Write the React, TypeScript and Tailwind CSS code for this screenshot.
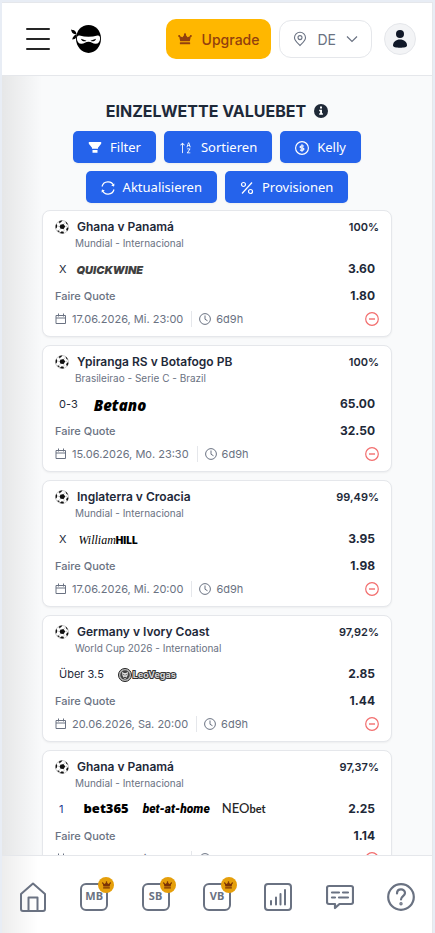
import { ReactNode } from "react";
import { BsSortAlphaUp } from "react-icons/bs";

interface Bet {
  id: number;
  match: string;
  league: string;
  percent: string;
  pick: string;
  isLink?: boolean;
  books: string[];
  odds: string;
  fairOdds: string;
  date: string;
}

const bets: Bet[] = [
  { id: 1, match: "Ghana v Panamá", league: "Mundial - Internacional", percent: "100%", pick: "X", books: ["quickwin"], odds: "3.60", fairOdds: "1.80", date: "17.06.2026, Mi. 23:00" },
  { id: 2, match: "Ypiranga RS v Botafogo PB", league: "Brasileirao - Serie C - Brazil", percent: "100%", pick: "0-3", books: ["betano"], odds: "65.00", fairOdds: "32.50", date: "15.06.2026, Mo. 23:30" },
  { id: 3, match: "Inglaterra v Croacia", league: "Mundial - Internacional", percent: "99,49%", pick: "X", books: ["williamhill"], odds: "3.95", fairOdds: "1.98", date: "17.06.2026, Mi. 20:00" },
  { id: 4, match: "Germany v Ivory Coast", league: "World Cup 2026 - International", percent: "97,92%", pick: "Über 3.5", books: ["leovegas"], odds: "2.85", fairOdds: "1.44", date: "20.06.2026, Sa. 20:00" },
  { id: 5, match: "Ghana v Panamá", league: "Mundial - Internacional", percent: "97,37%", pick: "1", isLink: true, books: ["bet365", "betathome", "neobet"], odds: "2.25", fairOdds: "1.14", date: "17.06.2026, Mi. 23:00" },
];

function CrownIcon({ className }: { className: string }) {
  return (
    <svg viewBox="0 0 16 14" fill="currentColor" className={className} aria-hidden="true">
      <path d="M1 3.200 5 5 8 1.200 11 5l4-1.800L13.600 9.600H2.400z" />
      <circle cx="1.200" cy="3.400" r="1.200" />
      <circle cx="8" cy="1.600" r="1.300" />
      <circle cx="14.800" cy="3.400" r="1.200" />
      <rect x="2" y="10.800" width="12" height="2.400" rx=".6" />
    </svg>
  );
}

function NinjaLogo() {
  return (
    <svg viewBox="0 0 30 28" className="h-7 w-[30px]" aria-hidden="true">
      <path d="M0 4.400c1 .6 2 .2 3 .8 1.600 1 2.400 2.600 2.600 4.200L3.400 9C1.400 8.400.4 6.600 0 4.400z" />
      <path d="M5 9.600c-1.800 1-3.400 2.600-3.800 5l2.400-.5c1.200-.8 2-2.400 2-4.200z" />
      <path d="M17.500 0C24.500 0 30 5.800 30 13.600 30 21.600 24.400 28 17.600 28S5 21.600 5 13.600C5 5.800 10.600 0 17.500 0z" />
      <path d="M8.500 10.500c3 .9 6 1.300 9 1.300s6-.4 9-1.300c1.600-.3 2.600.8 2.600 2.900 0 3-1.700 5.200-4.400 5.400-2.700.1-4.300-2-7.200-2s-4.500 2.100-7.200 2c-2.700-.2-4.400-2.400-4.400-5.400 0-2.100 1-3.200 2.600-2.900z" fill="#fff" />
      <path d="m10 13.800 5.500 1.900c-1.600 1.100-4.800.9-5.500-1.900zM25 13.800l-5.500 1.900c1.600 1.100 4.800.9 5.500-1.900z" />
    </svg>
  );
}

function SoccerBall() {
  return (
    <svg viewBox="0 0 28 28" className="size-3.5 shrink-0" aria-hidden="true">
      <circle cx="14" cy="14" r="13" fill="#fff" stroke="#aaa" strokeWidth="1.200" />
      <g fill="#111">
        <path d="m11 9.600 6-1.600 3.400 5-3.200 5.200-6.200-.6-2-4.600z" />
        <path d="M8.500 2.400c2-1 4.300-1.500 6.500-1.200l-3.400 3.600-4.200 1.200zM20.800 3.200c2.400 1.400 4.300 3.500 5.300 6.200l-3.200-1.600zM27 15.400c-.2 2.500-1.200 5-2.800 7l-2-3.400 2-4zM18 26.400c-2.600.9-5.600.8-8.200-.2l2.600-3.400h4.400zM1.200 11.400c.3-1.500.9-2.900 1.700-4.100l1.500 4-.9 4.500-2.200 1z" />
        <path d="m4 21.600 4-.6 1.600 4.200C7.400 24.400 5.400 23.200 4 21.600z" />
      </g>
      <path d="m11 9.600-3-4M17 8l3.500-2.500M20.400 13l4-.5M17.200 18.200l1.400 4M11 17.600l-3.400 3.600M9 13l-5-1" stroke="#999" fill="none" />
    </svg>
  );
}

function CalendarIcon() {
  return (
    <svg viewBox="0 0 12 12" fill="none" stroke="currentColor" className="size-3 shrink-0" aria-hidden="true">
      <path d="M1 2.500h9.500v8H1zM1 5h9.500M3.500.5v3M8.500.5v3" />
    </svg>
  );
}

function ClockIcon() {
  return (
    <svg viewBox="0 0 24 24" fill="none" stroke="currentColor" strokeWidth="2" className="size-3 shrink-0" aria-hidden="true">
      <circle cx="12" cy="12" r="10.800" />
      <path d="M12 5v7.500l5 3" />
    </svg>
  );
}

function BookLogo({ name }: { name: string }) {
  if (name === "quickwin") {
    return <span className="pt-0.5 pl-2.5 text-[11px] font-black italic text-neutral-700">QUICKWINE</span>;
  }
  if (name === "betano") {
    return <span className="pt-0.5 pl-4 font-['Open_Sans',sans-serif] text-[15px] font-extrabold italic text-black">Betano</span>;
  }
  if (name === "williamhill") {
    return (
      <span className="flex items-baseline pt-0.5 pl-3 text-black">
        <span className="font-['Liberation_Serif',serif] text-[12px] italic">William</span>
        <span className="text-[10px] font-black">HILL</span>
      </span>
    );
  }
  if (name === "leovegas") {
    return (
      <span className="flex items-center gap-px pt-0.5 pl-3.5">
        <svg viewBox="0 0 28 28" className="size-3.5" aria-hidden="true">
          <circle cx="14" cy="14" r="13" fill="#bbb" stroke="#222" strokeWidth="2" />
          <circle cx="14" cy="14" r="9.500" fill="#444" />
          <path d="M8 7.500 12 10h4l4-2.500-1 8L14 23l-5-7.500z" fill="#ddd" />
          <path d="m10.500 13 2.500 1M17.500 13 15 14M12 18l2 1.500 2-1.500" stroke="#222" strokeWidth="1.500" />
        </svg>
        <span className="text-[9px] font-bold text-neutral-300 [-webkit-text-stroke:2px_#333] [paint-order:stroke_fill]">LeoVegas</span>
      </span>
    );
  }
  if (name === "bet365") {
    return <span className="pl-5 font-['Open_Sans',sans-serif] text-[13px] font-extrabold text-black">bet365</span>;
  }
  if (name === "betathome") {
    return <span className="pl-3.5 font-['Roboto',sans-serif] text-[12px] font-black italic text-black">bet-at-home</span>;
  }
  return (
    <span className="pl-3 font-['Lato',sans-serif] text-[13px] font-medium text-neutral-800">
      NEO<span className="text-[11px] font-bold">bet</span>
    </span>
  );
}

function ActionButton({ title, icon }: { title: string; icon: ReactNode }) {
  return (
    <button
      type="button"
      className="flex h-8 items-center gap-2 rounded-[5px] bg-[#2563eb] px-[15px] pt-0.5 font-['Noto_Sans',sans-serif] text-[13px] text-white shadow-xs hover:bg-blue-700"
    >
      {icon}
      {title}
    </button>
  );
}

function BetCard({ bet }: { bet: Bet }) {
  return (
    <article className="rounded-lg border border-gray-200 bg-white px-3 pt-2 pb-[7px] shadow-xs">
      <div className="flex h-4 items-center gap-2">
        <SoccerBall />
        <h2 className="flex-1 text-[12px] font-semibold text-gray-800">{bet.match}</h2>
        <span className="text-[11px] font-semibold text-gray-800">{bet.percent}</span>
      </div>
      <p className="mt-px pl-5 text-[10px] leading-[14px] text-gray-500">{bet.league}</p>
      <div className="mt-[7px] flex h-6 items-center pr-1">
        <span className={bet.isLink ? "pl-1 text-[11px] text-blue-900" : "pl-1 text-[11px] text-gray-800"}>{bet.pick}</span>
        {bet.books.map((book) => (
          <BookLogo key={book} name={book} />
        ))}
        <span className="ml-auto text-[12px] font-bold text-gray-800">{bet.odds}</span>
      </div>
      <div className="mt-[3px] flex h-6 items-center justify-between pr-1">
        <span className="text-[11px] font-medium text-gray-500">Faire Quote</span>
        <span className="text-[12px] font-bold text-gray-800">{bet.fairOdds}</span>
      </div>
      <div className="mt-px flex h-5 items-center text-[11px] text-gray-500">
        <CalendarIcon />
        <span className="ml-[5px] border-r border-gray-200 pr-2">{bet.date}</span>
        <span className="ml-[7px] flex items-center gap-[5px]">
          <ClockIcon />
          6d9h
        </span>
        <button type="button" aria-label="Entfernen" className="ml-auto text-[#f26d6d]">
          <svg viewBox="0 0 14 14" fill="none" stroke="currentColor" className="size-3.5" aria-hidden="true">
            <circle cx="7" cy="7" r="6.300" strokeWidth="1.200" />
            <path d="M4 7h6" strokeWidth="1.400" />
          </svg>
        </button>
      </div>
    </article>
  );
}

function PremiumLink({ title }: { title: string }) {
  return (
    <a
      href="#"
      className="relative flex size-7 items-center justify-center rounded-md border-2 border-gray-500 font-['Noto_Sans',sans-serif] text-[11px] font-bold text-gray-500"
    >
      {title}
      <span className="absolute -top-2 -right-2 flex size-4 items-center justify-center rounded-full bg-[#e59f0b] text-amber-900">
        <CrownIcon className="h-2 w-[9px]" />
      </span>
    </a>
  );
}

export default function App() {
  return (
    <div className="h-screen bg-[#e8edf5] pt-0.5 pr-0.5 pl-0.5 font-['Inter',sans-serif]">
      <div className="flex h-full flex-col border-t border-r border-gray-200">
        <header className="flex h-[73px] shrink-0 items-center border-b border-gray-200 bg-white pr-4 pl-6">
          <button type="button" aria-label="Menü" className="flex w-6 flex-col gap-2">
            <span className="h-0.5 rounded-full bg-neutral-800" />
            <span className="h-0.5 rounded-full bg-neutral-800" />
            <span className="h-0.5 rounded-full bg-neutral-800" />
          </button>
          <a href="#" aria-label="Startseite" className="ml-[21px]">
            <NinjaLogo />
          </a>
          <button
            type="button"
            className="ml-auto flex h-10 items-center gap-2.5 rounded-[10px] bg-[#ffb700] px-3 text-[14px] font-medium text-[#92400e]"
          >
            <CrownIcon className="h-3 w-3.5" />
            Upgrade
          </button>
          <button
            type="button"
            className="ml-2 flex h-[38px] items-center rounded-xl border border-gray-200 bg-white px-[13px] text-[14px] text-gray-500"
          >
            <svg viewBox="0 0 14 16" fill="none" stroke="currentColor" strokeWidth="1.100" className="h-4 w-3.5" aria-hidden="true">
              <path d="M7 14.500C4.500 12 1.500 9.800 1.500 6.800a5.500 5.500 0 0 1 11 0C12.500 9.800 9.500 12 7 14.500z" />
              <circle cx="7" cy="6.600" r="2" />
            </svg>
            <span className="ml-2.5">DE</span>
            <svg viewBox="0 0 12 8" fill="none" stroke="currentColor" strokeWidth="1.200" className="ml-2.5 h-2 w-3" aria-hidden="true">
              <path d="m1 1.500 5 5 5-5" />
            </svg>
          </button>
          <button
            type="button"
            aria-label="Profil"
            className="ml-3 flex size-8 items-center justify-center rounded-full border border-gray-200 bg-gray-100 text-gray-900"
          >
            <svg viewBox="0 0 14 18" fill="currentColor" className="h-[18px] w-3.5" aria-hidden="true">
              <circle cx="7" cy="4" r="4" />
              <path d="M0 15.500C0 12 3 9.500 7 9.500s7 2.500 7 6c0 1.600-3 2.200-7 2.200s-7-.6-7-2.200z" />
            </svg>
          </button>
        </header>

        <main className="min-h-0 flex-1 overflow-hidden bg-gray-50 bg-[linear-gradient(to_right,rgba(0,0,0,0.08),transparent_40px)] px-10 pt-[23px]">
          <div className="flex items-center justify-center gap-2">
            <h1 className="text-[16px] leading-6 font-bold text-gray-800">EINZELWETTE VALUEBET</h1>
            <svg viewBox="0 0 14 14" className="size-3.5" aria-hidden="true">
              <circle cx="7" cy="7" r="7" fill="#1f2937" />
              <path d="M6 2.500h2v2H6zM5.200 5.700H8v3.600h.9v1.500H5.200V9.300h.9V7.200h-.9z" fill="#fff" />
            </svg>
          </div>
          <div className="mt-2 flex flex-wrap justify-center gap-2">
            <ActionButton
              title="Filter"
              icon={
                <svg viewBox="0 0 14 14" fill="currentColor" className="size-3.5" aria-hidden="true">
                  <path d="M.8 1h12.400v1.800L10 6.800v1H4v-1L.8 2.800zM4.500 9h5v2.800h-5z" />
                </svg>
              }
            />
            <ActionButton title="Sortieren" icon={<BsSortAlphaUp className="size-3.5" />} />
            <ActionButton
              title="Kelly"
              icon={
                <svg viewBox="0 0 24 24" fill="none" stroke="currentColor" strokeWidth="2" className="size-3.5" aria-hidden="true">
                  <circle cx="12" cy="12" r="11" />
                  <path d="M15.500 8.500H10.500a1.750 1.750 0 0 0 0 3.500h3a1.750 1.750 0 0 1 0 3.500H8.500M12 5.500v13" />
                </svg>
              }
            />
            <ActionButton
              title="Aktualisieren"
              icon={
                <svg viewBox="0 0 14 14" fill="none" stroke="currentColor" strokeWidth="1.200" className="size-3.5" aria-hidden="true">
                  <path d="M1 5.500A6.200 6.200 0 0 1 12.800 5M13 8.500A6.200 6.200 0 0 1 1.200 9" />
                  <path d="M13.500 2.500 13 5.400l-2.800-.8zM.5 11.500 1 8.600l2.800.8z" fill="currentColor" stroke="none" />
                </svg>
              }
            />
            <ActionButton
              title="Provisionen"
              icon={
                <svg viewBox="0 0 14 14" fill="none" stroke="currentColor" strokeWidth="1.200" className="size-3.5" aria-hidden="true">
                  <path d="M12 1.500 2 12.500" />
                  <circle cx="3.500" cy="3.500" r="2" />
                  <circle cx="10.500" cy="10.500" r="2" />
                </svg>
              }
            />
          </div>
          <div className="mt-[7px] flex flex-col gap-2">
            {bets.map((bet) => (
              <BetCard key={bet.id} bet={bet} />
            ))}
          </div>
        </main>

        <nav className="grid h-[78px] shrink-0 grid-cols-7 place-items-center border-t border-gray-200 bg-white bg-[linear-gradient(to_right,rgba(0,0,0,0.07),transparent_36px)] pt-1 text-gray-500">
          <a href="#" aria-label="Start">
            <svg viewBox="0 0 28 30" fill="none" stroke="currentColor" strokeWidth="2" strokeLinejoin="round" className="h-[30px] w-7" aria-hidden="true">
              <path d="M2 12 14 1.500 26 12v15a2 2 0 0 1-2 2H4a2 2 0 0 1-2-2z" />
              <path d="M9.500 29V15.500h9V29" />
            </svg>
          </a>
          <PremiumLink title="MB" />
          <PremiumLink title="SB" />
          <PremiumLink title="VB" />
          <a href="#" aria-label="Statistik">
            <svg viewBox="0 0 28 28" fill="none" stroke="currentColor" strokeWidth="2" strokeLinecap="round" className="size-7" aria-hidden="true">
              <rect x="1" y="1" width="26" height="26" rx="3" />
              <path d="M7 18v3.500M12 14.500v7M16.500 11v10.500M21 7v14.500" />
            </svg>
          </a>
          <a href="#" aria-label="Chat">
            <svg viewBox="0 0 28 26" fill="none" stroke="currentColor" strokeWidth="2.200" strokeLinejoin="round" strokeLinecap="round" className="h-[26px] w-7" aria-hidden="true">
              <path d="M3 2h22a2 2 0 0 1 2 2v14a2 2 0 0 1-2 2H13.500L9 24v-4H3a2 2 0 0 1-2-2V4a2 2 0 0 1 2-2z" />
              <path d="M6 8.500h7M17 8.500h5M6 13.500h3M13 13.500h9" />
            </svg>
          </a>
          <a href="#" aria-label="Hilfe">
            <svg viewBox="0 0 28 28" fill="none" stroke="currentColor" strokeWidth="2.200" strokeLinecap="round" className="size-7" aria-hidden="true">
              <circle cx="14" cy="14" r="12.800" />
              <path d="M10 10.500c0-5.500 8-5.200 8-.5 0 3-4 3.300-4 6.500" />
              <circle cx="14" cy="20.800" r=".6" fill="currentColor" />
            </svg>
          </a>
        </nav>
      </div>
    </div>
  );
}
